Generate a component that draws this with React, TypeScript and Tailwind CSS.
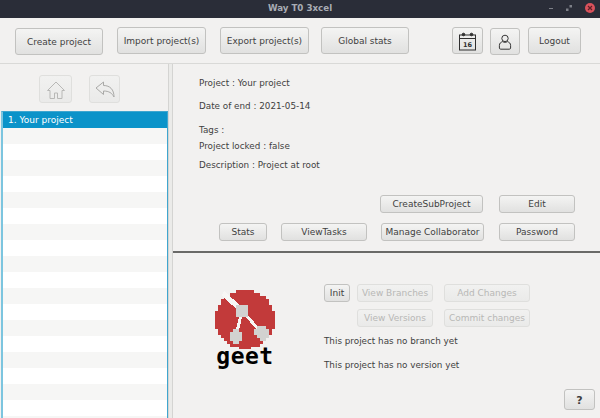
import type { ReactNode } from "react"

const FONT = "font-['DejaVu_Sans',sans-serif]"

function Btn({ className = "", disabled = false, children }: { className?: string; disabled?: boolean; children: ReactNode }) {
  const look = disabled
    ? "border-[#dfdfdd] bg-gradient-to-b from-[#f1f1f0] to-[#eaeae9] text-[#b8b8b6]"
    : "border-[#c2c2c0] bg-gradient-to-b from-[#f4f4f3] to-[#e1e1e0] text-[#3f3f3f]"
  return (
    <button className={`flex shrink-0 items-center justify-center rounded-[3px] border pt-[1px] text-[9px] leading-none ${look} ${className}`}>
      {children}
    </button>
  )
}

// pixel art logo, drawn on a 3px grid
function GeetLogo() {
  const red: { x: number; y: number }[] = []
  const grey: { x: number; y: number }[] = []
  for (let y = 0; y < 60; y += 3) {
    for (let x = 0; x < 60; x += 3) {
      const px = x + 1.5
      const py = y + 1.5
      if (Math.hypot((px - 30) / 30, (py - 29.5) / 29.5) > 1) continue
      red.push({ x, y })
      if (Math.hypot(px - 27, py - 21) < 7 || Math.hypot(px - 21, py - 46) < 7 || Math.hypot(px - 47, py - 43) < 7) grey.push({ x, y })
    }
  }
  return (
    <div className="mt-[6px] flex h-[82px] w-[60px] shrink-0 flex-col items-center">
      <svg width="60" height="59" viewBox="0 0 60 59" shapeRendering="crispEdges">
        {red.map((c) => (
          <rect key={`${c.x}-${c.y}`} x={c.x} y={c.y} width="3" height="3" fill="#c23a3a" />
        ))}
        <path d="M8 3L27 21" stroke="#f7f7f5" strokeWidth="5" />
        <path d="M27 21L21 46M27 21L47 43" stroke="#f7f7f5" strokeWidth="3" />
        {grey.map((c) => (
          <rect key={`${c.x}-${c.y}`} x={c.x} y={c.y} width="3" height="3" fill="#d2d2d0" />
        ))}
      </svg>
      <span className="-mt-[5px] font-['DejaVu_Sans_Mono',monospace] text-[23px] leading-[24px] font-bold tracking-[0.5px] text-black">geet</span>
    </div>
  )
}

export default function App() {
  const rows = Array.from({ length: 19 }, (_, i) => i)
  return (
    <div className={`flex h-[418px] w-[600px] flex-col overflow-hidden bg-[#f2f1f0] ${FONT}`}>
      {/* title bar */}
      <div className="relative flex h-[18px] shrink-0 items-center justify-center bg-[#2a2d38]">
        <span className="text-[8.7px] font-bold text-[#a8acb4]">Way T0 3xcel</span>
        <div className="absolute top-[3px] right-[5px] flex items-center gap-[13px]">
          <div className="h-[1px] w-[4px] bg-[#7d8088]" />
          <svg width="6" height="6" viewBox="0 0 6 6">
            <rect x="3.5" y="0" width="2.5" height="2.5" fill="#7d8088" />
            <rect x="0" y="3.5" width="2.5" height="2.5" fill="#7d8088" />
          </svg>
          <div className="flex h-[10px] w-[10px] items-center justify-center rounded-full bg-[#d9525c]">
            <svg width="6" height="6" viewBox="0 0 6 6">
              <path d="M1 1L5 5M5 1L1 5" stroke="#5e1f25" strokeWidth="1.2" />
            </svg>
          </div>
        </div>
      </div>

      {/* toolbar */}
      <div className="flex h-[46px] shrink-0 items-start border-b border-[#d9d9d7] pt-[9px] pl-[15px]">
        <Btn className="mt-[1px] h-[27px] w-[88px]">Create project</Btn>
        <Btn className="ml-[14px] h-[27px] w-[89px]">Import project(s)</Btn>
        <Btn className="ml-[14px] h-[27px] w-[89px]">Export project(s)</Btn>
        <Btn className="ml-[12px] h-[27px] w-[88px]">Global stats</Btn>
        <Btn className="ml-[43px] h-[27px] w-[31px]">
          <svg width="19" height="19" viewBox="0 0 19 19" fill="none" stroke="#2f2f2f">
            <rect x="1.5" y="3" width="16" height="15" />
            <path d="M1.5 6.5H17.5" />
            <circle cx="5.5" cy="2.5" r="1.3" fill="#2f2f2f" />
            <circle cx="13.5" cy="2.5" r="1.3" fill="#2f2f2f" />
            <text x="9.5" y="14.5" textAnchor="middle" fontSize="6.5" fontWeight="700" fill="#2f2f2f" stroke="none">16</text>
          </svg>
        </Btn>
        <Btn className="mt-[1px] ml-[7px] h-[27px] w-[30px]">
          <svg width="14" height="16" viewBox="0 0 16 20" fill="none" stroke="#2f2f2f" strokeWidth="1.2">
            <circle cx="8" cy="5.5" r="4" />
            <path d="M5 9.5C2.5 10.5 1 11.5 1 14.5V17.5C1 18.3 1.7 19 2.5 19H13.5C14.3 19 15 18.3 15 17.5V14.5C15 11.5 13.5 10.5 11 9.5C9.5 10.7 6.5 10.7 5 9.5Z" />
          </svg>
        </Btn>
        <Btn className="ml-[8px] h-[27px] w-[53px]">Logout</Btn>
      </div>

      <div className="flex min-h-0 flex-1">
        {/* project tree */}
        <div className="flex w-[168px] shrink-0 flex-col pl-[1px]">
          <div className="flex h-[47px] shrink-0 items-start pt-[11px] pl-[38px]">
            <Btn disabled className="h-[28px] w-[33px]">
              <svg width="20" height="20" viewBox="0 0 20 20" fill="none" stroke="#b8b8b6" strokeWidth="1">
                <path d="M1.5 10.5L10 2L18.5 10.5H16V18.5H11.5V13H8.5V18.5H4V10.5Z" />
              </svg>
            </Btn>
            <Btn disabled className="ml-[17px] h-[28px] w-[31px]">
              <svg width="20" height="17" viewBox="0 0 20 17" fill="none" stroke="#a9a9a7" strokeWidth="1">
                <path d="M1 7L8.5 1V4.5C15 4.5 19 8.5 19 16C17 12 14 10 8.5 10V13.5Z" />
              </svg>
            </Btn>
          </div>
          <div className="min-h-0 flex-1 border-t border-r border-l-2 border-t-[#3fa6cf] border-r-[#3fa6cf] border-l-[#7cc5df] bg-white">
            <div className="flex h-[16px] items-center bg-[#0b93c9] pt-[1px] pl-[5px] text-[9px] text-white">1. Your project</div>
            {rows.map((i) => (
              <div key={i} className={`h-[16px] ${i % 2 === 0 ? "bg-[#f6f6f5]" : "bg-white"}`} />
            ))}
          </div>
        </div>

        {/* split pane divider */}
        <div className="w-[5px] shrink-0 border-x border-[#d4d4d2] bg-[#ebebe9]" />

        <div className="flex min-w-0 flex-1 flex-col text-[8.8px] leading-[12px] text-[#3f3f3f]">
          {/* project details */}
          <div className="flex h-[189px] shrink-0 flex-col border-b-2 border-[#6a6a68] pt-[13px]">
            <div className="pl-[26px]">
              <p>Project : Your project</p>
              <p className="mt-[11px]">Date of end : 2021-05-14</p>
              <p className="mt-[12px]">Tags :</p>
              <p className="mt-[4px]">Project locked : false</p>
              <p className="mt-[7px]">Description : Project at root</p>
            </div>
            <div className="mt-[24px] flex pl-[207px]">
              <Btn className="h-[18px] w-[103px]">CreateSubProject</Btn>
              <Btn className="ml-[16px] h-[18px] w-[76px]">Edit</Btn>
            </div>
            <div className="mt-[10px] flex pl-[46px]">
              <Btn className="h-[18px] w-[48px]">Stats</Btn>
              <Btn className="ml-[14px] h-[18px] w-[86px]">ViewTasks</Btn>
              <Btn className="ml-[14px] h-[18px] w-[103px]">Manage Collaborator</Btn>
              <Btn className="ml-[15px] h-[18px] w-[76px]">Password</Btn>
            </div>
          </div>

          {/* geet panel */}
          <div className="flex min-h-0 flex-1 flex-col pt-[31px]">
            <div className="flex pl-[42px]">
              <GeetLogo />
              <div className="ml-[49px] flex flex-col">
                <div className="flex">
                  <Btn className="h-[18px] w-[26px] border-[#a9a9a7]">Init</Btn>
                  <Btn disabled className="ml-[7px] h-[18px] w-[76px]">View Branches</Btn>
                  <Btn disabled className="ml-[11px] h-[18px] w-[86px]">Add Changes</Btn>
                </div>
                <div className="mt-[7px] flex pl-[33px]">
                  <Btn disabled className="h-[18px] w-[76px]">View Versions</Btn>
                  <Btn disabled className="ml-[11px] h-[18px] w-[86px]">Commit changes</Btn>
                </div>
                <p className="mt-[8px]">This project has no branch yet</p>
                <p className="mt-[12px]">This project has no version yet</p>
              </div>
            </div>
            <div className="mt-[17px] flex justify-end pr-[5px]">
              <Btn className="h-[21px] w-[31px] text-[11px] font-bold">?</Btn>
            </div>
          </div>
        </div>
      </div>
    </div>
  )
}
